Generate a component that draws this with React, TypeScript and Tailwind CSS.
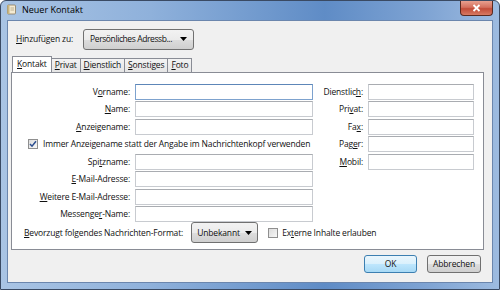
const U = ({ children }: { children: string }) => <span className="underline underline-offset-[1px]">{children}</span>;

const Arrow = () => (
  <svg width="7" height="4" viewBox="0 0 7 4" className="shrink-0">
    <path d="M0 0 H7 L3.5 4 Z" fill="#000" />
  </svg>
);

const leftRows: { label: React.ReactNode; focus?: boolean }[] = [
  { label: <>V<U>o</U>rname:</>, focus: true },
  { label: <><U>N</U>ame:</> },
  { label: <><U>A</U>nzeigename:</> },
];

const leftRows2: { label: React.ReactNode }[] = [
  { label: <>Spi<U>t</U>zname:</> },
  { label: <><U>E</U>-Mail-Adresse:</> },
  { label: <><U>W</U>eitere E-Mail-Adresse:</> },
  { label: <>Messenge<U>r</U>-Name:</> },
];

const rightRows: React.ReactNode[] = [
  <>Dienstlic<U>h</U>:</>,
  <>Pri<U>v</U>at:</>,
  <>Fa<U>x</U>:</>,
  <>Pag<U>e</U>r:</>,
  <><U>M</U>obil:</>,
];

const Field = ({ w, focus }: { w: string; focus?: boolean }) => (
  <div
    className={`h-[16px] ${w} bg-white border ${
      focus ? 'border-[#7da2ce] border-t-[#5d86b8]' : 'border-[#c8cbd0] border-t-[#a9acb1]'
    }`}
  />
);

const Button = ({ children, w, h = 'h-[18px]', def }: { children: React.ReactNode; w: string; h?: string; def?: boolean }) => (
  <div
    className={`${w} ${h} whitespace-nowrap rounded-[3px] border flex items-center justify-center ${
      def
        ? 'border-[#3c7fb1] bg-[linear-gradient(#eaf6fd_0%,#d9f0fc_50%,#bee6fd_51%,#a7d9f5_100%)]'
        : 'border-[#707070] bg-[linear-gradient(#f2f2f2_0%,#ebebeb_50%,#dddddd_51%,#cfcfcf_100%)]'
    }`}
  >
    {children}
  </div>
);

const Check = ({ checked }: { checked?: boolean }) => (
  <div className="w-[10px] h-[10px] shrink-0 border border-[#8f8f8f] bg-[linear-gradient(135deg,#dcdcdc,#f8f8f8)] flex items-center justify-center">
    {checked && (
      <svg width="8" height="8" viewBox="0 0 8 8">
        <path d="M1 4 L3 6.2 L7 1.2" fill="none" stroke="#2a4d8f" strokeWidth="1.5" />
      </svg>
    )}
  </div>
);

const tabs = [
  { t: <><U>K</U>ontakt</>, active: true },
  { t: <><U>P</U>rivat</> },
  { t: <><U>D</U>ienstlich</> },
  { t: <><U>S</U>onstiges</> },
  { t: <><U>F</U>oto</> },
];

export default function App() {
  return (
    <div
      className="w-[500px] h-[290px] flex flex-col overflow-hidden rounded-t-[6px] border border-[#3a4a63] bg-[linear-gradient(90deg,#a9c4e4_0%,#8fb1db_30%,#5f8cc6_65%,#7ea3d3_85%,#9dbbe0_100%)] text-[#111] text-[8.5px] leading-[12px] tracking-[-0.15px] whitespace-nowrap"
      style={{ fontFamily: '"Open Sans", "Noto Sans", sans-serif' }}
    >
      <div className="h-[19px] flex items-start shrink-0">
        <div className="w-[11px] h-[11px] ml-[5px] mt-[3px]">
          <svg width="11" height="11" viewBox="0 0 11 11">
            <rect x="1.5" y="1" width="8" height="9" rx="1" fill="#f3ead2" stroke="#8a7a5a" strokeWidth="0.8" />
            <rect x="1.5" y="1" width="2" height="9" fill="#c9b57f" />
            <line x1="4.5" y1="4" x2="8" y2="4" stroke="#9a8a6a" strokeWidth="0.6" />
            <line x1="4.5" y1="6" x2="8" y2="6" stroke="#9a8a6a" strokeWidth="0.6" />
          </svg>
        </div>
        <div className="ml-[5px] mt-[3px] text-[9px] tracking-normal text-black">Neuer Kontakt</div>
        <div className="ml-auto mr-[6px] w-[33px] h-[15px] rounded-b-[4px] border border-t-0 border-[#5a2a20] bg-[linear-gradient(#e8a08f_0%,#d4705e_45%,#c24c38_55%,#d77a63_100%)] flex items-center justify-center">
          <svg width="9" height="8" viewBox="0 0 9 8">
            <path d="M1.5 1 L7.5 7 M7.5 1 L1.5 7" stroke="#fff" strokeWidth="1.8" />
          </svg>
        </div>
      </div>

      <div className="flex-1 mx-[6px] mb-[6px] border border-[#6b86ad] bg-[#f0f0f0] flex flex-col">
        <div className="flex items-center pl-[8px] pt-[7px] h-[29px]">
          <span className="mr-[10px]"><U>H</U>inzufügen zu:</span>
          <Button w="w-[111px]" h="h-[21px]">
            <span className="flex-1 pl-[6px] tracking-[-0.4px]">Persönliches Adressb...</span>
            <span className="mr-[6px]"><Arrow /></span>
          </Button>
        </div>

        <div className="flex items-end ml-[4px] mt-[6px] h-[16px]">
          {tabs.map((tab, i) => (
            <div
              key={i}
              className={`border border-[#898c95] -mr-px ${
                tab.active
                  ? 'h-[16px] bg-white border-b-0 z-10 pt-[1px] px-[4px]'
                  : 'h-[14px] px-[3px] bg-[linear-gradient(#f3f3f3,#e5e5e5)] border-b-0'
              }`}
            >
              {tab.t}
            </div>
          ))}
        </div>

        <div className="mx-[3px] w-[473px] h-[178px] bg-white border border-[#898c95] flex flex-col">
          <div className="flex pt-[10px]">
            <div className="grid grid-cols-[118px_178px] gap-x-[5px] auto-rows-[17.5px] items-center">
              {leftRows.map((r, i) => (
                <div key={i} className="contents">
                  <div className="text-right">{r.label}</div>
                  <Field w="w-[178px]" focus={r.focus} />
                </div>
              ))}
              <div className="col-span-2 flex items-center pl-[16px] gap-[5px]">
                <Check checked />
                <span>Immer Anzeigename statt der Angabe im Nachrichtenkopf verwenden</span>
              </div>
              {leftRows2.map((r, i) => (
                <div key={i} className="contents">
                  <div className="text-right">{r.label}</div>
                  <Field w="w-[178px]" />
                </div>
              ))}
            </div>
            <div className="ml-auto mr-[9px] grid grid-cols-[auto_106px] gap-x-[5px] auto-rows-[17.5px] items-center self-start">
              {rightRows.map((r, i) => (
                <div key={i} className="contents">
                  <div className="text-right">{r}</div>
                  <Field w="w-[106px]" />
                </div>
              ))}
            </div>
          </div>
          <div className="flex items-center pl-[12px] mt-[-1px]">
            <span><U>B</U>evorzugt folgendes Nachrichten-Format:</span>
            <div className="ml-[8px]">
              <Button w="w-[67px]" h="h-[21px]">
                <span className="flex-1 pl-[5px]">Unbekannt</span>
                <span className="mr-[5px]"><Arrow /></span>
              </Button>
            </div>
            <div className="ml-[10px] flex items-center gap-[4px]">
              <Check />
              <span>Ex<U>t</U>erne Inhalte erlauben</span>
            </div>
          </div>
        </div>

        <div className="flex justify-end gap-[10px] mr-[11px] mt-[5px]">
          <Button w="w-[53px]" def>OK</Button>
          <Button w="w-[54px]">Abbrechen</Button>
        </div>
      </div>
    </div>
  );
}
